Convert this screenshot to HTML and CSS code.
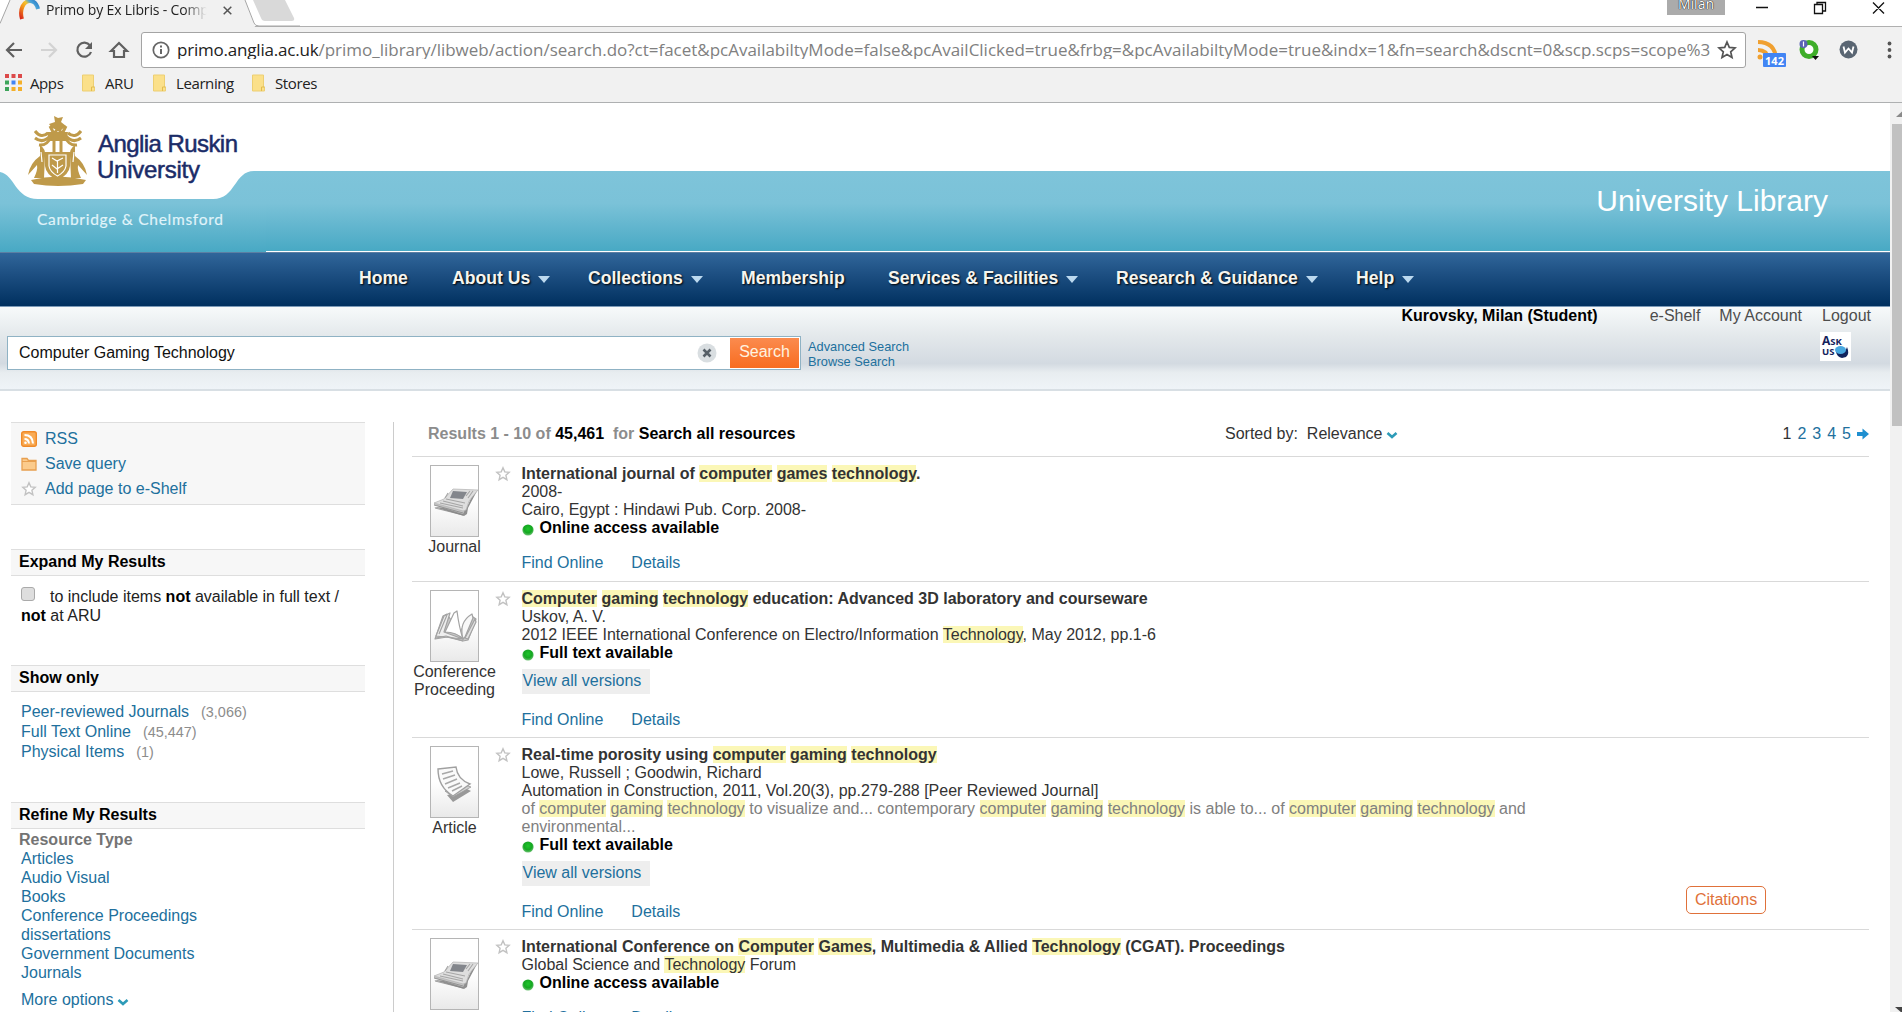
FILE: index.html
```html
<!DOCTYPE html>
<html lang="en">
<head>
<meta charset="utf-8">
<title>Primo by Ex Libris - Computer Gaming Technology</title>
<link rel="stylesheet" href="styles.css">
</head>
<body>
<svg width="0" height="0" class="defs">
  <defs>
    <linearGradient id="paper" x1="0" y1="0" x2="0" y2="1"><stop offset="0" stop-color="#fff"/><stop offset=".5" stop-color="#fff"/><stop offset="1" stop-color="#e9e9e9"/></linearGradient>
    <linearGradient id="teal" x1="0" y1="0" x2="0" y2="1"><stop offset="0" stop-color="#7ec4da"/><stop offset=".4" stop-color="#7bc2d8"/><stop offset="1" stop-color="#48a9c4"/></linearGradient>
    <linearGradient id="swirl" x1="0" y1="1" x2="1" y2="0"><stop offset="0" stop-color="#d8261c"/><stop offset=".4" stop-color="#f49a1a"/><stop offset=".6" stop-color="#f4c430"/><stop offset=".75" stop-color="#49a6dc"/><stop offset="1" stop-color="#2a78c0"/></linearGradient>
    <radialGradient id="dot" cx=".5" cy=".4" r=".6"><stop offset="0" stop-color="#1fc62b"/><stop offset=".6" stop-color="#16a722"/><stop offset="1" stop-color="#6fc276"/></radialGradient>
    <symbol id="star" viewBox="0 0 16 16"><path d="M8 1.8l1.8 4.1 4.4.4-3.3 3 1 4.4L8 11.4l-3.9 2.3 1-4.4-3.3-3 4.4-.4z" fill="#fff" stroke="#c2c2c2" stroke-width="1.4"/></symbol>
    <symbol id="folder" viewBox="0 0 14 18"><path d="M1 1h11v12h1v4H1z" fill="#fbe08a" stroke="#edcf72"/><path d="M10 17v-4h3" fill="none" stroke="#e3bd4f"/></symbol>
    <symbol id="green" viewBox="0 0 12 12"><circle cx="6" cy="6" r="5.6" fill="url(#dot)"/></symbol>
    <symbol id="chev" viewBox="0 0 12 9"><path d="M1.5 2L6 6l4.500-4" fill="none" stroke="#2d9bb8" stroke-width="2.6"/></symbol>
    <symbol id="journal" viewBox="0 0 49 72"><rect x=".5" y=".5" width="48" height="71" fill="url(#paper)" stroke="#b5b5b5"/><path d="M4 42l30 9 3-2 1-6 9-17-3 1-8 17z" fill="#8f8f8f"/><path d="M4 38v2l29 9 2-4z" fill="#c4c4c4"/><path d="M4 38l10-4 9-10 25 1-9 11-3 9-3 1z" fill="#dedede" stroke="#b0b0b0" stroke-width=".7"/><path d="M23 26l14 1-4 7-13-1z" fill="#83868c"/><path d="M18 28l-3 5M13 36l20 5M10 38l23 5M16 34l19 4M38 33l5-7M36 31l4-5" stroke="#a6a6a6" stroke-width="1.100"/><path d="M4 40l29 8M5 43l28 7" stroke="#858585" stroke-width=".8" fill="none"/></symbol>
    <symbol id="book" viewBox="0 0 49 72"><rect x=".5" y=".5" width="48" height="71" fill="url(#paper)" stroke="#b5b5b5"/><g stroke="#a3a3a3" stroke-width="1.200" stroke-linejoin="round"><path d="M5 49l8-23 4-2 12 18 14-15 3 2-8 21-5 1-16-4z" fill="#c9c9c9"/><path d="M6 46l8-20 6-3-6 19 19 7z" fill="#eee"/><path d="M15 42L24 23l3-2c1 8 2 16 6 28-5-5-10-7-18-7z" fill="#fff"/><path d="M33 49c-3-11-1-19 9-25l1 4-8 19z" fill="#f8f8f8"/><path d="M35 48l10-19 1 3-8 17z" fill="#e2e2e2"/><path d="M9 44l8-19M6 48l10-2 17 5" fill="none"/></g></symbol>
    <symbol id="article" viewBox="0 0 49 72"><rect x=".5" y=".5" width="48" height="71" fill="url(#paper)" stroke="#b5b5b5"/><path d="M17 49c8-1 12-4 16-8l8 4-18 11z" fill="#999"/><path d="M15 45c8 0 13-3 17-7l9 3-18 10z" fill="#d2d2d2" stroke="#999" stroke-width=".8"/><path d="M8 23l18-2c1 9 6 14 14 17L23 50C13 44 8 36 8 23z" fill="#fafafa" stroke="#a0a0a0" stroke-width="1.400"/><path d="M12 28l11-3M13 33l12-4M15 38l12-5M18 42l12-5M22 45l10-5" stroke="#a8a8a8" stroke-width="1.500"/></symbol>
  </defs>
</svg>

<header class="chrome">
  <div class="tabs">
    <svg class="tabshape" viewBox="0 0 300 27" width="300" height="27"><path d="M0 27V23L10 0H245L255 27z" fill="#f1f1f1"/><path d="M0 23.500L10 0M245 0l9 23q1 3 5 3h41" fill="none" stroke="#a6a6a6"/><path d="M253 0h32l9 18q1 3-2 3h-27q-3 0-4-3z" fill="#d9d9d9"/></svg>
    <div class="tab">
      <svg width="21" height="20" viewBox="0 0 21 20"><path d="M3 19C0 9 5 1 11 1q6 0 8 8" fill="none" stroke="url(#swirl)" stroke-width="4"/></svg>
      <span class="tabtitle">Primo by Ex Libris - Comp</span>
      <svg class="tabclose" width="9" height="9" viewBox="0 0 9 9"><path d="M.7.7l7.600 7.600M8.300.7L.7 8.300" stroke="#555" stroke-width="1.500"/></svg>
    </div>
    <div class="window">
      <span class="profile">Milan</span>
      <svg width="190" height="20" viewBox="1712 0 190 20" fill="none" stroke="#111" stroke-width="1.300"><path d="M1756 7.500h12M1814.500 4.500h8v9h-8zM1817 4V2.500h8.500V11H1823M1873 2.500l11 11M1884 2.500l-11 11"/></svg>
    </div>
  </div>
  <div class="toolbar">
    <svg width="141" height="38" viewBox="0 31 141 38" fill="none" stroke="#606060" stroke-width="2.200"><path d="M22 50H7M14 43l-7 7 7 7"/><path d="M41 50h15M49 43l7 7-7 7" stroke="#d3d3d3"/><path d="M90 45.500A7 7 0 1 0 91 52"/><path d="M92 42v7h-7z" fill="#606060" stroke="none"/><path d="M111 51l8-8 8 8h-3v6h-10v-6z"/></svg>
    <div class="omnibox">
      <svg width="18" height="18" viewBox="0 0 18 18"><circle cx="9" cy="9" r="7.700" fill="none" stroke="#666" stroke-width="1.700"/><path d="M9 8v5M9 4.500v2" stroke="#666" stroke-width="2"/></svg>
      <span class="url"><b>primo.anglia.ac.uk</b>/primo_library/libweb/action/search.do?ct=facet&amp;pcAvailabiltyMode=false&amp;pcAvailClicked=true&amp;frbg=&amp;pcAvailabiltyMode=true&amp;indx=1&amp;fn=search&amp;dscnt=0&amp;scp.scps=scope%3</span>
      <svg width="20" height="20" viewBox="0 0 20 20"><path d="M10 2l2.300 5.400 5.800.5-4.400 3.900 1.300 5.700-5-3-5 3 1.300-5.700L1.900 7.900l5.800-.5z" fill="none" stroke="#555" stroke-width="1.700"/></svg>
    </div>
    <svg class="extensions" width="156" height="40" viewBox="1746 31 156 40">
      <g fill="none" stroke="#f0a030" stroke-width="4"><path d="M1758 42q17 0 18 17M1758 50q9 0 10 9"/></g><circle cx="1760" cy="57" r="2.500" fill="#f0a030"/>
      <rect x="1763" y="53" width="23" height="14" rx="1" fill="#4285f4"/><text x="1774.500" y="64.500" text-anchor="middle" class="count">142</text>
      <circle cx="1809" cy="49.500" r="7" fill="#fff" stroke="#3fae2a" stroke-width="5"/><circle cx="1803.500" cy="44" r="4" fill="#5b63b5"/><path d="M1803.500 41.500v5" stroke="#fff" stroke-width="1.200"/><path d="M1812 56h7l-3.500 4z" fill="#111"/>
      <circle cx="1848.500" cy="49.500" r="9" fill="#5a6673"/><path d="M1843.500 46.500l1.500 6 3.500-4 3.500 4 1.500-6" fill="none" stroke="#fff" stroke-width="1.800"/>
      <g fill="#555"><circle cx="1889.500" cy="43.500" r="1.900"/><circle cx="1889.500" cy="50" r="1.900"/><circle cx="1889.500" cy="56.500" r="1.900"/></g>
    </svg>
  </div>
  <nav class="bookmarks">
    <span class="bm apps"><svg width="17" height="17" viewBox="0 0 17 17"><path d="M0 0h4v4H0zM6.500 0h4v4h-4zM13 0h4v4h-4z" fill="#dc4a4a"/><path d="M0 6.500h4v4H0z" fill="#3da45a"/><path d="M6.500 6.500h4v4h-4z" fill="#4285f4"/><path d="M13 6.500h4v4h-4zM6.500 13h4v4h-4zM13 13h4v4h-4z" fill="#f4b02a"/><path d="M0 13h4v4H0z" fill="#3da45a"/></svg>Apps</span>
    <span class="bm aru"><svg width="15" height="18"><use href="#folder"/></svg>ARU</span>
    <span class="bm learning"><svg width="15" height="18"><use href="#folder"/></svg>Learning</span>
    <span class="bm"><svg width="15" height="18"><use href="#folder"/></svg>Stores</span>
  </nav>
</header>

<div class="viewport">
  <div class="page">
    <div class="banner">
      <svg class="logo" width="266" height="149" viewBox="0 103 266 149">
        <rect x="0" y="171" width="266" height="81" fill="url(#teal)"/>
        <path d="M0 103H266V171H254C234 171 236 199 213 199H38C15 199 15 175 0 172z" fill="#fff"/>
        <g fill="#bf9a4a">
          <path d="M31 180q27-7 55 0l-3 4q-25 4-49 0z"/>
          <path d="M45 152h25v14q-1 9-12.500 14Q46 175 45 166z"/>
          <path d="M40 145q6 4 5 11l-1 22H34q4-8 3-13l-9 10q2-12 12-19zM75 145q-6 4-5 11l1 22h10q-4-8-3-13l9 10q-2-12-12-19z"/>
          <path d="M52 128l-3-4 6-2-1-6 4 2 5-1-2 5 5 4-6 5zM47 132h21l-2 9H49z"/>
        </g>
        <g fill="none" stroke="#bf9a4a" stroke-width="3"><path d="M35 131q6 8 13 2M35 138q8 6 15-2M39 145q8 1 12-8M81 131q-6 8-13 2M81 138q-8 6-15-2M77 145q-8 1-12-8M54 140v12M61 140v12M50 126l4 8 4-6 4 6 4-8"/></g>
        <g fill="none" stroke="#fff" stroke-width="1.200"><path d="M49 155h17v11q-1 6-8.500 10Q50 172 49 166zM52 158l5 3 6-3M52 165l5 4 6-4M57.500 160v13"/><path d="M41 152l1 10M74 152l-1 10"/></g>
        <text class="logoname" x="98" y="152" textLength="140">Anglia Ruskin</text>
        <text class="logoname" x="97" y="178" textLength="103">University</text>
        <text class="campus" x="37" y="225" textLength="186">Cambridge &amp; Chelmsford</text>
      </svg>
      <div class="bannerright"><h1>University Library</h1></div>
    </div>
    <nav class="mainnav">
      <a class="n1">Home</a><a class="n2">About Us <i></i></a><a class="n3">Collections <i></i></a><a class="n4">Membership</a><a class="n5">Services &amp; Facilities <i></i></a><a class="n6">Research &amp; Guidance <i></i></a><a>Help <i></i></a>
    </nav>
    <section class="searchband">
      <div class="user"><b>Kurovsky, Milan (Student)</b><a>e-Shelf</a><a>My Account</a><a>Logout</a></div>
      <div class="searchrow">
        <div class="searchbox"><span>Computer Gaming Technology</span>
          <svg width="20" height="20" viewBox="0 0 20 20"><circle cx="10" cy="10" r="9.500" fill="#d9dee1"/><path d="M6.500 6.500l7 7M13.500 6.500l-7 7" stroke="#555e66" stroke-width="2.600"/></svg>
          <button>Search</button></div>
        <div class="searchlinks"><a>Advanced Search</a><a>Browse Search</a></div>
        <svg class="ask" width="31" height="29" viewBox="0 0 31 29"><rect width="31" height="29" fill="#fff"/><path d="M16 20q10 1 11-5 3 7-1 10l-4 1q-5-1-6-6z" fill="#10245e"/><ellipse cx="20.500" cy="18" rx="5.500" ry="4" fill="#48a8e0"/><text x="2" y="12.500">A<tspan class="sc">SK</tspan></text><text class="sc" x="2" y="22.500">US</text></svg>
      </div>
    </section>
    <div class="columns">
      <aside class="sidebar">
        <div class="actions">
          <a><svg width="16" height="16" viewBox="0 0 16 16"><rect x=".7" y=".7" width="14.600" height="14.600" rx="2" fill="#f9ab55" stroke="#f08a28" stroke-width="1.400"/><g fill="none" stroke="#fff" stroke-width="2"><path d="M3.500 4q8 0 8.500 8.500M3.500 8q4 0 4.500 4.500"/></g><circle cx="4.500" cy="11.800" r="1.300" fill="#fff"/></svg>RSS</a>
          <a><svg width="16" height="16" viewBox="0 0 16 16"><path d="M1 14V2.500h5l1.500 2H15V14z" fill="#fbcb8c" stroke="#e8a050" stroke-width="1.300"/><path d="M1 5.500h14" stroke="#e8a050"/></svg>Save query</a>
          <a><svg width="16" height="16"><use href="#star"/></svg>Add page to e-Shelf</a>
        </div>
        <h2>Expand My Results</h2>
        <p class="expand"><span class="check"></span>to include items <b>not</b> available in full text / <b>not</b> at ARU</p>
        <h2 class="showonly">Show only</h2>
        <ul class="counts"><li><a>Peer-reviewed Journals</a><span>(3,066)</span></li><li><a>Full Text Online</a><span>(45,447)</span></li><li><a>Physical Items</a><span>(1)</span></li></ul>
        <h2>Refine My Results</h2>
        <h3>Resource Type</h3>
        <ul class="types"><li>Articles</li><li>Audio Visual</li><li>Books</li><li>Conference Proceedings</li><li>dissertations</li><li>Government Documents</li><li>Journals</li></ul>
        <a class="more">More options <svg width="12" height="9"><use href="#chev"/></svg></a>
      </aside>
      <main class="results">
        <div class="resulthead">
          <div class="total">Results 1 - 10 of <b>45,461</b>&nbsp; for <b>Search all resources</b></div>
          <div class="sort">Sorted by:&nbsp; Relevance <svg width="12" height="9"><use href="#chev"/></svg></div>
          <div class="pages"><span>1</span><a>2</a><a>3</a><a>4</a><a>5</a><svg width="12" height="12" viewBox="0 0 12 12"><path d="M0 4h5.500V.5L12 6l-6.500 5.500V8H0z" fill="#1f8fd0"/></svg></div>
        </div>
        <article>
          <div class="thumb"><svg width="49" height="72"><use href="#journal"/></svg>Journal</div>
          <svg class="fav" width="16" height="16"><use href="#star"/></svg>
          <div class="record"><h4>International journal of <mark>computer</mark> <mark>games</mark> <mark>technology</mark>.</h4><p>2008-</p><p>Cairo, Egypt : Hindawi Pub. Corp. 2008-</p>
            <p class="avail"><svg width="12" height="12"><use href="#green"/></svg>Online access available</p>
            <div class="links"><a>Find Online</a><a>Details</a></div></div>
        </article>
        <article>
          <div class="thumb"><svg width="49" height="72"><use href="#book"/></svg>Conference Proceeding</div>
          <svg class="fav" width="16" height="16"><use href="#star"/></svg>
          <div class="record"><h4><mark>Computer</mark> <mark>gaming</mark> <mark>technology</mark> education: Advanced 3D laboratory and courseware</h4><p>Uskov, A. V.</p><p>2012 IEEE International Conference on Electro/Information <mark>Technology</mark>, May 2012, pp.1-6</p>
            <p class="avail"><svg width="12" height="12"><use href="#green"/></svg>Full text available</p><a class="versions">View all versions</a>
            <div class="links"><a>Find Online</a><a>Details</a></div></div>
        </article>
        <article>
          <div class="thumb"><svg width="49" height="72"><use href="#article"/></svg>Article</div>
          <svg class="fav" width="16" height="16"><use href="#star"/></svg>
          <div class="record"><h4>Real-time porosity using <mark>computer</mark> <mark>gaming</mark> <mark>technology</mark></h4><p>Lowe, Russell ; Goodwin, Richard</p><p>Automation in Construction, 2011, Vol.20(3), pp.279-288 [Peer Reviewed Journal]</p>
            <p class="snippet">of <mark>computer</mark> <mark>gaming</mark> <mark>technology</mark> to visualize and... contemporary <mark>computer</mark> <mark>gaming</mark> <mark>technology</mark> is able to... of <mark>computer</mark> <mark>gaming</mark> <mark>technology</mark> and</p><p class="snippet">environmental...</p>
            <p class="avail"><svg width="12" height="12"><use href="#green"/></svg>Full text available</p><a class="versions">View all versions</a>
            <div class="links"><a>Find Online</a><a>Details</a></div></div>
          <a class="citations">Citations</a>
        </article>
        <article>
          <div class="thumb"><svg width="49" height="72"><use href="#journal"/></svg></div>
          <svg class="fav" width="16" height="16"><use href="#star"/></svg>
          <div class="record"><h4>International Conference on <mark>Computer</mark> <mark>Games</mark>, Multimedia &amp; Allied <mark>Technology</mark> (CGAT). Proceedings</h4><p>Global Science and <mark>Technology</mark> Forum</p>
            <p class="avail"><svg width="12" height="12"><use href="#green"/></svg>Online access available</p>
            <div class="links"><a>Find Online</a><a>Details</a></div></div>
        </article>
      </main>
    </div>
  </div>
  <div class="scrollbar"><svg width="12" height="21" viewBox="0 0 12 21"><path d="M6 14l6-5.500 0 5.500z" fill="#8a8a8a"/></svg><div class="grip"></div><svg width="12" height="6" viewBox="0 0 12 6"><path d="M5 1h7v6z" fill="#444"/></svg></div>
</div>
</body>
</html>
```
FILE: styles.css
```css
* { box-sizing: border-box; margin: 0; padding: 0; }
html, body { height: 1012px; overflow: hidden; }
body { display: flex; flex-direction: column; background: #fff; color: #333; font: 16px/18px "Liberation Sans", Arial, sans-serif; }
svg { display: block; flex: none; }
.defs { position: absolute; }
ul { list-style: none; }
a { color: #21709d; white-space: nowrap; }

/* Browser frame */
.chrome { flex: none; height: 103px; background: #f1f1f1; border-bottom: 1px solid #aeb0b1; font-family: "Open Sans", "Noto Sans", sans-serif; color: #222; }
.tabs { display: grid; grid-template-columns: 1fr auto; height: 27px; background: #fff; border-bottom: 1px solid #b0b0b0; }
.tabshape, .tab, .window { grid-row: 1; }
.tabshape { grid-column: 1; }
.tab { grid-column: 1; display: flex; width: 240px; padding-left: 19px; font-size: 14px; }
.tabtitle { width: 164px; margin: 1px 13px 0 6px; overflow: hidden; white-space: nowrap; letter-spacing: -.15px; mask-image: linear-gradient(90deg, #000 84%, transparent 98%); }
.tabclose { margin-top: 6px; }
.window { grid-column: 2; display: flex; }
.profile { width: 58px; height: 15px; margin-right: -13px; overflow: hidden; background: #ababab; color: #fff; text-align: center; font-size: 14px; line-height: 8px; text-shadow: 0 0 1px #000, 0 0 1px #000; }
.toolbar { display: flex; height: 42px; padding-top: 4px; }
.omnibox { display: flex; align-items: center; width: 1605px; height: 36px; margin-top: 1px; padding: 0 8px 0 10px; border: 1px solid #a4a4a4; border-radius: 3px; background: #fff; }
.url { width: 1537px; margin: 0 3px 0 7px; overflow: hidden; white-space: nowrap; font-size: 17px; letter-spacing: -.012px; color: #808080; }
.url b { font-weight: 400; letter-spacing: -.2px; color: #222; }
.count { font: 700 11px "Open Sans", sans-serif; fill: #fff; }
.bookmarks { display: flex; height: 33px; padding: 0 0 6px 5px; align-items: center; font-size: 15px; letter-spacing: -.4px; }
.bm { display: flex; align-items: center; gap: 9px; }
.apps { width: 76px; gap: 8px; }
.aru { width: 71px; }
.learning { width: 99px; }

/* Page and its scrollbar */
.viewport { flex: 1; min-height: 0; display: flex; }
.page { flex: 1; min-width: 0; overflow: hidden; }
.scrollbar { width: 12px; display: flex; flex-direction: column; background: #f1f1f1; }
.grip { width: 10px; height: 302px; margin: 0 0 auto 2px; background: #c1c1c1; }

.banner { display: flex; height: 149px; }
.bannerright { flex: 1; margin-top: 68px; padding: 13px 62px 0 0; border-bottom: 1px solid #fff; background: linear-gradient(#7ec4da, #7bc2d8 40%, #48a9c4); text-align: right; }
h1 { color: #fff; font-size: 30px; line-height: 34px; font-weight: 400; }
.logoname { font-size: 24px; fill: #1b2c68; stroke: #1b2c68; stroke-width: .5px; }
.campus { font: 15.5px Lato, sans-serif; fill: #e0f4fa; stroke: #e0f4fa; stroke-width: .15px; }
.mainnav { display: flex; align-items: center; height: 55px; padding: 0 0 3px 359px; background: linear-gradient(#30669a, #1d4f82 40%, #00305f); border-top: 1px solid #5b7fa3; border-bottom: 1px solid #7b9ab8; }
.mainnav a { display: flex; align-items: center; gap: 8px; color: #f5f5f0; font-size: 17.600px; font-weight: 700; text-shadow: 1px 1px 2px #000; }
.mainnav i { border: 6px solid transparent; border-top: 7px solid #bcd9ef; border-bottom: 0; margin-top: 2px; }
.n1 { width: 93px; }
.n2 { width: 136px; }
.n3 { width: 153px; }
.n4 { width: 147px; }
.n5 { width: 228px; }
.n6 { width: 240px; }

.searchband { height: 84px; border-bottom: 2px solid #d8dfe4; background: linear-gradient(#f7fafa, #e3e8eb 36%, #d3dae1 69%, #e8edf0 80%, #eff4f8); }
.user { display: flex; justify-content: flex-end; padding-right: 19px; }
.user b { color: #000; margin-right: 52px; }
.user a { color: #4d4d4d; margin-right: 19px; }
.user a:nth-child(3) { margin-right: 20px; }
.user a:last-child { margin-right: 0; }
.searchrow { display: flex; padding: 11px 39px 0 7px; }
.searchbox { display: flex; align-items: center; width: 794px; height: 34px; padding: 1px; border: 1px solid #8fb2c4; background: #fff; color: #111; }
.searchbox span { flex: 1; padding-left: 10px; }
.searchbox svg { margin-right: 13px; }
.searchbox button { width: 69px; height: 30px; padding-bottom: 3px; border: 0; background: linear-gradient(#fb8b4e, #f86c20); color: #fff3e0; font: inherit; }
.searchlinks { flex: 1; display: flex; flex-direction: column; padding: 4px 0 0 7px; font-size: 12.800px; line-height: 14.500px; }
.ask { margin-top: -4px; }
.ask text { font: 700 12px "Open Sans", sans-serif; fill: #14235c; }
.ask .sc { font-size: 9.500px; }

.columns { display: flex; height: 640px; padding: 31px 21px 0 11px; }
.sidebar { width: 354px; flex: none; }
.actions { height: 83px; padding: 6px 10px; background: #f7f7f7; border: solid #dedede; border-width: 1px 0; }
.actions a { display: flex; align-items: center; gap: 8px; height: 25px; padding-bottom: 5px; }
h2 { height: 27px; margin-top: 44px; padding-left: 8px; border: solid #dedede; border-width: 1px 0; background: #f7f7f7; color: #000; font-size: 16px; line-height: 24px; }
.expand { padding: 11px 20px 0 10px; color: #222; line-height: 19px; }
.expand b { color: #000; }
.check { display: inline-block; width: 14px; height: 14px; margin-right: 15px; border: 1px solid #aaa; border-radius: 3px; background: #dedede; vertical-align: 1px; }
.showonly { margin-top: 40px; }
.counts { padding: 10px 0 0 10px; line-height: 20px; }
.counts span { margin-left: 12px; color: #8c8c8c; font-size: 14.400px; }
.counts + h2 { margin-top: 40px; }
h3 { padding: 1px 0 0 8px; color: #747474; font-size: 16px; line-height: 19px; }
.types { padding-left: 10px; color: #21709d; line-height: 19px; }
.more { display: flex; align-items: center; gap: 3px; padding: 9px 0 0 10px; }
.more svg { margin-top: 4px; }

.results { flex: 1; margin-left: 28px; padding-left: 18px; border-left: 1px solid #ccc; }
.resulthead { display: grid; grid-template-columns: 797px 1fr auto; height: 34px; padding: 3px 0 0 16px; }
.total { color: #8c8c8c; font-weight: 700; }
.total b { color: #000; }
.sort { display: flex; align-items: center; gap: 4px; height: 18px; }
.sort svg { margin-top: 3px; }
.pages { display: flex; align-items: center; gap: 6px; height: 18px; }
article { display: grid; grid-template-columns: 83px 18px 1020px 1fr; border-top: 1px solid #d9d9d9; padding: 8px 0 9px; }
article + article { padding-bottom: 8px; }
.thumb { display: flex; flex-direction: column; align-items: center; width: 85px; text-align: center; }
.thumb svg { margin-bottom: 1px; }
.fav { margin-top: 1px; }
.record { padding-left: 8.5px; }
h4 { font-size: 16px; }
mark { background: #fbf7b7; color: inherit; }
.snippet { color: #808080; }
.avail { display: flex; align-items: center; gap: 6px; color: #000; font-weight: 700; }
.avail svg { margin-top: 3px; }
.versions { display: table; height: 25px; margin-top: 7px; padding: 3px 9px 0 1px; background: #eee; }
.links { display: flex; gap: 28px; margin-top: 17px; }
.citations { align-self: end; justify-self: end; width: 80px; height: 28px; margin: 0 103px 7px 0; border: 1px solid #e0713a; border-radius: 5px; color: #e0713a; text-align: center; line-height: 26px; }
```
